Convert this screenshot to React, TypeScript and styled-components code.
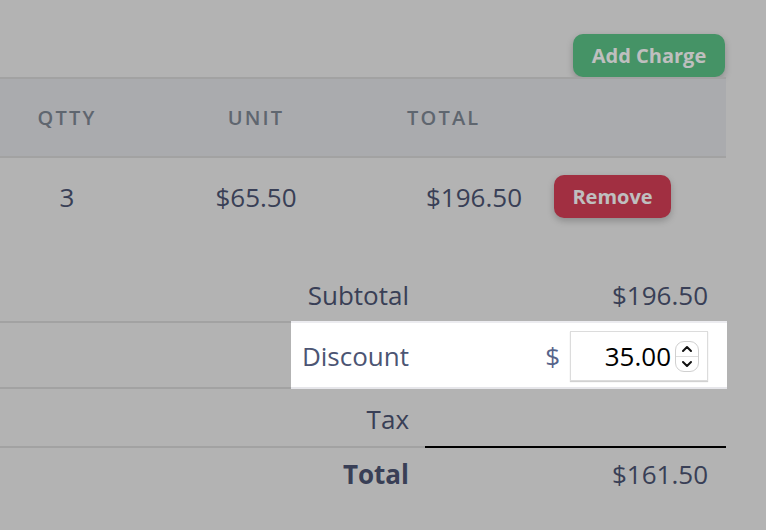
import React from "react";
import styled, { createGlobalStyle } from "styled-components";

const GlobalStyle = createGlobalStyle`
  *, *::before, *::after { box-sizing: border-box; }
  html, body { margin: 0; padding: 0; }
  body {
    background: #efefef;
    font-family: "Open Sans", "Noto Sans", sans-serif;
    color: #4c5573;
    overflow: hidden;
  }
`;

const line = "#d9d9d9";

const Page = styled.div`
  width: 726px;
  height: 530px;
  display: flex;
  flex-direction: column;
`;

const Toolbar = styled.div`
  height: 77px;
  display: flex;
  justify-content: flex-end;
  align-items: flex-end;
  padding-right: 1px;
`;

const Button = styled.button<{ $tone: "green" | "red"; $width: number }>`
  width: ${(p) => p.$width}px;
  height: 43px;
  border: none;
  border-radius: 10px;
  background: ${(p) => (p.$tone === "green" ? "#5cc488" : "#d73f57")};
  color: #fff;
  font-family: inherit;
  font-size: 20px;
  font-weight: 700;
  box-shadow: 0 3px 7px rgba(0, 0, 0, 0.22);
  cursor: pointer;
`;

const ItemHeader = styled.div`
  display: grid;
  grid-template-columns: 134px 244px 162px 1fr;
  height: 81px;
  align-items: center;
  background: #e3e4e8;
  border-top: 2px solid ${line};
  border-bottom: 2px solid ${line};
`;

const HeadCell = styled.div<{ $indent?: number }>`
  text-align: ${(p) => (p.$indent !== undefined ? "left" : "center")};
  padding-left: ${(p) => p.$indent ?? 0}px;
  font-size: 20px;
  font-weight: 600;
  letter-spacing: 2.2px;
  text-transform: uppercase;
  color: #7f8895;
`;

const ItemRow = styled.div`
  display: grid;
  grid-template-columns: 134px 244px 162px 1fr;
  height: 77px;
  align-items: center;
`;

const ItemCell = styled.div<{ $indent?: number }>`
  text-align: ${(p) => (p.$indent !== undefined ? "left" : "center")};
  padding-left: ${(p) => p.$indent ?? 0}px;
  font-size: 26px;
`;

const Summary = styled.div`
  margin-top: 31px;
  display: flex;
  flex-direction: column;
`;

const SummaryRow = styled.div<{ $height: number }>`
  display: grid;
  grid-template-columns: 291px 134px 301px;
  height: ${(p) => p.$height}px;
`;

type Line = "none" | "grey" | "black";

const lineColor = (l?: Line) =>
  l === "black" ? "#000" : l === "grey" ? line : "transparent";

const Blank = styled.div<{ $top?: Line; $bottom?: Line }>`
  border-top: 2px solid ${(p) => lineColor(p.$top)};
  border-bottom: 2px solid ${(p) => lineColor(p.$bottom)};
`;

const Label = styled.div<{ $top?: Line; $bold?: boolean }>`
  display: flex;
  align-items: center;
  justify-content: flex-end;
  padding-right: 16px;
  font-size: 26px;
  font-weight: ${(p) => (p.$bold ? 700 : 400)};
  border-top: 2px solid ${(p) => lineColor(p.$top)};
`;

const Value = styled.div<{ $top?: Line }>`
  display: flex;
  align-items: center;
  justify-content: flex-end;
  padding-right: 18px;
  font-size: 26px;
  border-top: 2px solid ${(p) => lineColor(p.$top)};
`;

const Spotlight = styled.div`
  grid-column: span 2;
  display: grid;
  grid-template-columns: 134px 301px;
  position: relative;
  z-index: 2;
  width: 436px;
  background: #fff;
  border-top: 2px solid #ececf0;
  border-bottom: 2px solid #e6e6ea;
`;

const Currency = styled.span`
  margin-right: 10px;
  color: #56648a;
`;

const NumberBox = styled.div`
  width: 138px;
  height: 50px;
  display: flex;
  align-items: center;
  justify-content: flex-end;
  gap: 4px;
  padding-right: 8px;
  background: #fff;
  border: 1px solid #dcdcdc;
  box-shadow: 0 1px 1px rgba(0, 0, 0, 0.18);
`;

const NumberInput = styled.input`
  width: 96px;
  border: none;
  outline: none;
  padding: 0;
  background: transparent;
  text-align: right;
  font-family: inherit;
  font-size: 26px;
  color: #000;
`;

const Spinner = styled.div`
  width: 24px;
  height: 31px;
  display: flex;
  flex-direction: column;
  border: 1px solid #d0d0d0;
  border-radius: 9px;
  overflow: hidden;
`;

const SpinHalf = styled.div<{ $divider?: boolean }>`
  flex: 1;
  display: flex;
  align-items: center;
  justify-content: center;
  border-bottom: ${(p) => (p.$divider ? "1px solid #dedede" : "none")};
`;

const Overlay = styled.div`
  position: fixed;
  inset: 0;
  z-index: 1;
  background: rgba(0, 0, 0, 0.25);
  pointer-events: none;
`;

const Chevron = ({ up }: { up?: boolean }) => (
  <svg width="12" height="8" viewBox="0 0 12 8">
    <path
      d={up ? "M2 6 L6 2 L10 6" : "M2 2 L6 6 L10 2"}
      fill="none"
      stroke="#111"
      strokeWidth="2"
      strokeLinecap="round"
      strokeLinejoin="round"
    />
  </svg>
);

export default function App() {
  return (
    <>
      <GlobalStyle />
      <Page>
        <Toolbar>
          <Button $tone="green" $width={152}>Add Charge</Button>
        </Toolbar>
        <ItemHeader>
          <HeadCell>Qtty</HeadCell>
          <HeadCell>Unit</HeadCell>
          <HeadCell $indent={29}>Total</HeadCell>
          <div />
        </ItemHeader>
        <ItemRow>
          <ItemCell>3</ItemCell>
          <ItemCell>$65.50</ItemCell>
          <ItemCell $indent={48}>$196.50</ItemCell>
          <ItemCell $indent={14}>
            <Button $tone="red" $width={117}>Remove</Button>
          </ItemCell>
        </ItemRow>
        <Summary>
          <SummaryRow $height={55}>
            <Blank />
            <Label>Subtotal</Label>
            <Value>$196.50</Value>
          </SummaryRow>
          <SummaryRow $height={68}>
            <Blank $top="grey" $bottom="grey" />
            <Spotlight>
              <Label>Discount</Label>
              <Value>
                <Currency>$</Currency>
                <NumberBox>
                  <NumberInput type="text" defaultValue="35.00" />
                  <Spinner>
                    <SpinHalf $divider>
                      <Chevron up />
                    </SpinHalf>
                    <SpinHalf>
                      <Chevron />
                    </SpinHalf>
                  </Spinner>
                </NumberBox>
              </Value>
            </Spotlight>
          </SummaryRow>
          <SummaryRow $height={57}>
            <Blank />
            <Label>Tax</Label>
            <Value />
          </SummaryRow>
          <SummaryRow $height={54}>
            <Blank $top="grey" />
            <Label $top="grey" $bold>
              Total
            </Label>
            <Value $top="black">$161.50</Value>
          </SummaryRow>
        </Summary>
      </Page>
      <Overlay />
    </>
  );
}
